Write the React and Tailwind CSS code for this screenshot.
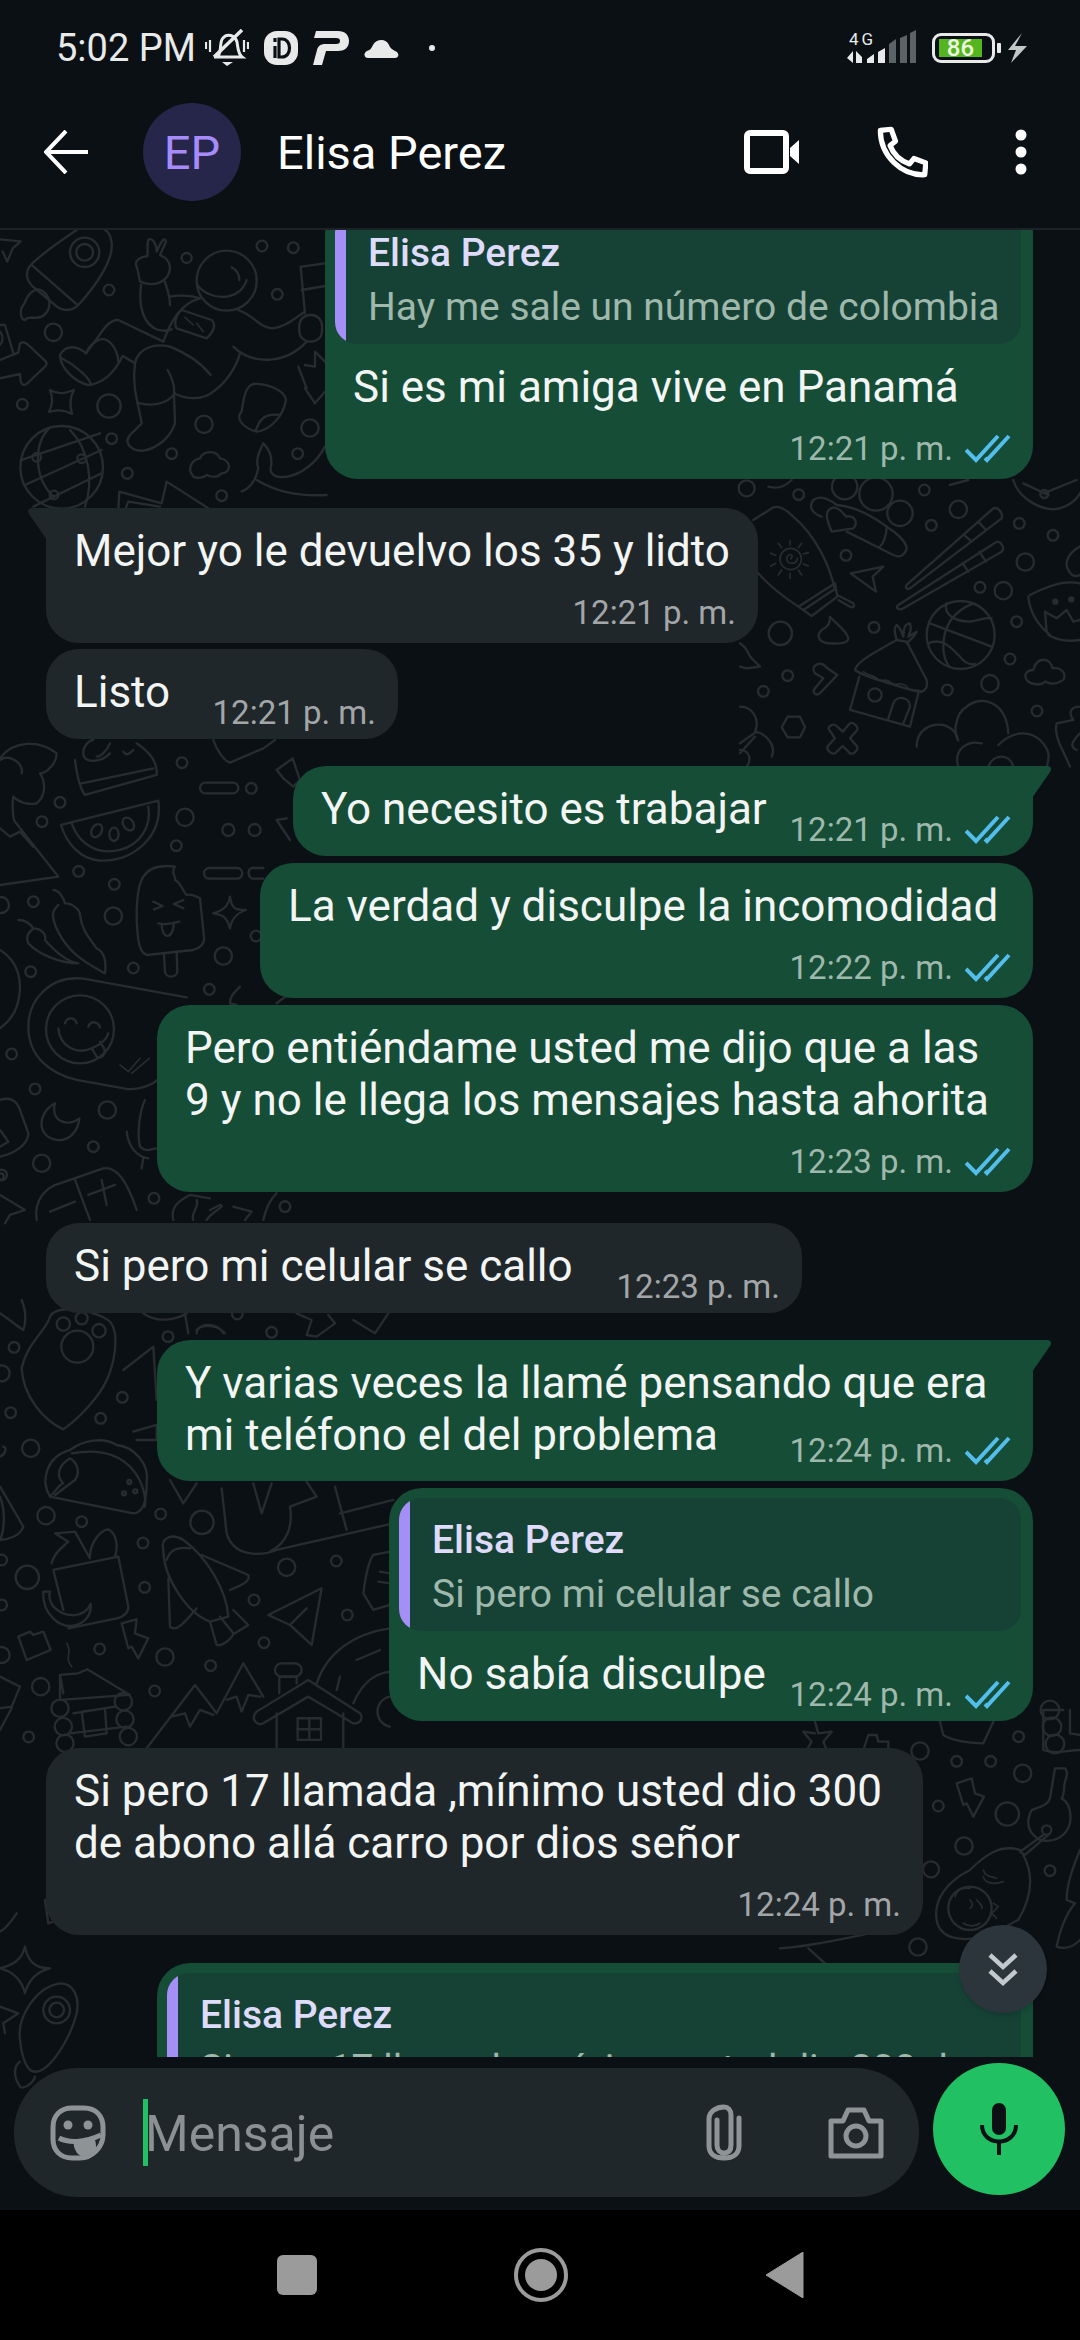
import React from 'react';

const FONT = { fontFamily: 'Roboto, sans-serif' };

function Dots({ items }) {
  return items.map(([x, y, r], i) => <circle key={i} cx={x} cy={y} r={r} />);
}

// Doodles are written in the coordinates of 3x crops, hence the scale on each group
function Wallpaper() {
  return (
    <svg className="absolute inset-0" width="1080" height="1980" viewBox="0 230 1080 1980" fill="none" stroke="#282c30" strokeWidth="7" strokeLinecap="round" strokeLinejoin="round">
      {/* top left: rocket, astronaut, globe */}
      <g transform="translate(0 230) scale(.3333)">
        <path d="M230 0C170 40 110 85 88 110C72 135 85 160 105 175L165 225C185 245 215 245 235 225C290 165 340 90 335 40C333 20 325 5 315 0" />
        <path d="M95 105L232 225" />
        <circle cx="254" cy="67" r="44" /><circle cx="254" cy="67" r="25" />
        <path d="M105 180C75 195 80 215 70 225C55 245 65 270 75 270C85 255 105 270 125 260C150 245 155 215 140 195C130 180 115 175 105 180Z" />
        <path d="M0 28L62 34L38 55L22 95L8 65" />
        <path d="M0 390L55 368L60 340C70 335 75 335 85 345L138 395C142 402 140 405 135 410L80 462C70 468 65 462 62 455L60 432L0 445" />
        <path d="M0 285L15 285L40 370M0 305C10 315 10 335 0 345" />
        <path d="M150 480C175 495 195 490 222 480C208 505 208 525 216 552C190 538 170 538 147 546C158 525 160 505 150 480Z" />
        <circle cx="185" cy="712" r="124" />
        <path d="M65 690L300 610M75 765L305 660M100 830L305 730M150 592C100 640 100 740 160 800M210 600C270 660 280 760 255 830" />
        <circle cx="110" cy="682" r="13" /><circle cx="245" cy="686" r="13" /><circle cx="162" cy="795" r="13" />
        <path d="M423 165C415 230 430 285 475 300C495 305 505 302 515 298M510 225C510 190 495 160 495 155M510 200C530 195 570 195 600 205" />
        <path d="M420 155C470 175 510 150 510 110C505 85 490 80 480 75L498 35C495 20 485 30 470 65C470 40 455 20 445 30C440 45 445 60 442 78C425 80 400 90 410 110C415 120 415 135 420 155Z" />
        <circle cx="680" cy="152" r="90" />
        <path d="M592 165C630 215 720 215 740 150M695 112C710 120 718 135 718 150" />
        <path d="M490 335L355 270C330 270 315 290 295 320L258 370C235 350 200 340 180 375C180 410 220 455 265 465C310 460 345 425 368 378L405 400C395 470 415 520 425 580L390 615C370 640 395 665 430 662C470 655 510 625 525 580L522 490C560 510 610 510 640 485C680 455 705 420 720 370" />
        <path d="M490 335C510 280 540 220 600 205M185 385C205 395 260 430 272 460M258 370C270 340 300 320 320 330C345 345 355 375 355 395" />
        <path d="M405 400C415 350 470 340 510 350C560 370 600 395 632 435M503 420C515 440 525 470 522 490M412 518C450 530 500 525 525 490" />
        <path d="M700 350C750 400 850 410 920 335M715 240C760 255 780 295 820 295C860 290 890 260 915 245" />
        <rect x="898" y="255" width="68" height="80" rx="32" />
        <path d="M545 240L635 270C650 285 640 305 620 325L530 295C520 280 530 250 545 240Z" />
        <path d="M555 262L580 285M590 280L610 305" strokeWidth="5" />
        <path d="M905 110L975 100M902 110L915 250M905 180L975 168" />
        <path d="M915 405L945 410L945 365L975 395M920 475L895 410M915 475L945 520L975 485" />
        <path d="M725 545C705 565 730 595 770 605C810 600 850 560 858 510C855 480 800 460 760 462C735 470 730 510 725 545ZM768 600C780 565 795 550 840 555" />
        <path d="M580 740C560 715 575 690 600 685C610 660 650 660 660 685C695 690 695 730 665 730C650 745 630 740 620 735C610 745 590 745 580 740Z" />
        <path d="M725 785C760 770 770 740 775 715C765 690 780 660 790 640C805 655 820 680 812 715C810 735 830 745 860 740C900 735 950 700 975 650M770 750C820 780 880 800 980 795" />
        <path d="M355 840L358 785L485 820L500 755L625 835M375 840L385 815L480 830" />
        <Dots items={[[327, 180, 16], [560, 84, 15], [786, 48, 16], [880, 53, 16], [832, 193, 16], [160, 307, 26], [67, 523, 16], [327, 528, 35], [335, 626, 16], [612, 583, 26], [515, 671, 16], [382, 730, 16], [893, 671, 16], [665, 797, 16], [930, 594, 26]]} />
      </g>
      {/* middle right, beside the short bubbles */}
      <g transform="translate(740 480) scale(.3333)">
        <path d="M40 120L100 82C120 75 140 90 160 110C230 170 270 260 285 330M55 280C90 320 130 350 175 380" />
        <path d="M175 380L285 310L292 350L215 408Z" /><path d="M190 390L280 330M292 345L340 370C345 380 340 385 330 380L295 360" />
        <circle cx="152" cy="237" r="32" strokeWidth="5" /><path d="M152 237C165 225 145 215 140 235C140 255 170 255 172 235" strokeWidth="5" />
        <path d="M150 182V195M150 280V295M92 220L107 226M92 258L107 250M190 222L205 218M190 252L205 258M115 190L125 203M185 190L175 203M115 285L125 270M185 285L175 270" strokeWidth="5" />
        <path d="M245 110C215 100 205 80 220 60C240 45 265 55 290 75C350 80 400 110 440 140C475 160 500 190 500 205C495 225 480 235 460 225L320 155" />
        <path d="M275 155C260 120 250 90 280 82C305 85 310 105 320 110C345 105 355 130 340 145L275 155Z" />
        <path d="M440 140C440 165 430 190 420 200" />
        <path d="M500 315L760 85C775 80 790 100 785 115L510 325C500 330 495 322 500 315ZM475 375L770 185C785 185 795 205 785 215L485 388C470 390 468 380 475 375Z" />
        <path d="M672 165L695 185M715 125L738 150M668 250L685 275M718 215L738 245" />
        <circle cx="662" cy="465" r="102" />
        <path d="M570 430L755 500M620 370C610 400 640 425 690 425C720 420 740 410 755 415M700 370C650 390 610 430 610 500C610 530 620 550 630 562M565 490C610 470 640 510 660 530C675 550 690 555 705 552" />
        <path d="M345 570C350 550 370 535 470 480L500 485L560 600C565 625 550 640 535 635C510 630 370 590 345 570Z" />
        <path d="M370 575C385 590 395 580 410 595C425 610 435 590 455 610C470 620 485 600 505 625C515 635 535 625 545 635" strokeWidth="5" />
        <path d="M358 590L330 690L510 740L535 640M445 715L460 670C470 645 510 650 510 680L490 730" />
        <path d="M470 480C465 460 460 445 470 435C480 440 485 455 490 470C490 450 495 430 510 430C515 445 510 460 505 470L530 455C525 470 510 480 500 490" />
        <path d="M430 260L332 280L408 335L398 290Z" />
        <path d="M270 410C285 430 320 450 325 475C325 490 300 492 270 490C240 490 225 470 245 450C265 440 270 430 270 410Z" />
        <path d="M125 742L143 710H180L195 742L180 772H143Z" />
        <path d="M265 745C270 735 280 730 290 738L308 755L330 730C340 725 355 740 352 750L330 775L352 800C355 810 340 825 330 820L308 798L285 820C275 825 260 810 262 800L285 775Z" />
        <path d="M222 560C235 545 250 550 262 565L292 585L240 640C225 650 215 635 225 625L250 595L225 580C220 575 220 565 222 560Z" />
        <path d="M885 612C850 610 845 570 880 570C890 530 930 530 938 565C975 560 985 600 960 605C945 615 925 610 915 605C905 615 895 615 885 612Z" />
        <path d="M655 782C640 760 645 700 680 680C730 640 800 670 805 760M775 795C810 760 860 745 900 780C930 810 930 830 920 860M530 800C530 750 570 730 610 735C640 745 650 760 655 782M655 860C640 810 680 780 725 790M745 860C760 820 810 820 820 860" />
        <path d="M870 345C960 300 995 305 1020 310M865 350C870 410 910 450 930 465M920 455L915 395L950 415L980 390L1000 425L1020 420M925 465C960 485 990 485 1020 480" />
        <circle cx="946" cy="365" r="6" fill="#282c30" /><circle cx="994" cy="358" r="6" fill="#282c30" />
        <path d="M1020 200C990 215 970 245 985 270C995 290 1005 290 1020 285" />
        <path d="M1020 680C990 680 985 700 1000 720L950 730C940 770 970 810 990 860M1020 760C1000 780 985 800 1010 810" />
        <path d="M820 0C830 40 880 85 940 88C980 85 1010 60 1020 40M910 40L1010 0M850 10L925 45" /><circle cx="913" cy="42" r="12" />
        <path d="M85 20C120 30 140 15 155 0M630 15L685 0" />
        <path d="M0 490C30 510 20 525 40 540L60 560L20 565L0 560" />
        <path d="M0 680C40 680 60 720 45 755C80 760 110 800 95 830M0 790L50 755M45 770L0 820M0 810C30 810 35 840 20 860" />
        <Dots items={[[20, 25, 24], [176, 44, 16], [314, 20, 38], [408, 42, 50], [480, 100, 38], [553, 30, 16], [655, 88, 26], [574, 136, 16], [838, 130, 16], [939, 166, 16], [856, 246, 26], [720, 322, 16], [790, 332, 26], [830, 425, 16], [318, 226, 16], [121, 460, 35], [402, 442, 16], [143, 587, 16], [70, 634, 16], [405, 645, 20], [810, 537, 16], [750, 611, 26], [622, 630, 16], [891, 693, 16]]} />
      </g>
      {/* left edge, lower half */}
      <g transform="translate(0 740) scale(.3333)">
        <path d="M0 60C30 40 70 70 65 100M0 55C40 0 120 0 170 40C170 70 140 100 120 100C140 130 135 170 110 190C90 195 60 190 40 170C35 200 40 240 45 245L175 410L0 435M0 265L30 290L60 275L100 320" />
        <path d="M225 60C230 100 240 145 255 165L470 105C475 60 440 30 410 10M245 130L460 85" />
        <path d="M250 40C250 15 270 0 280 0M330 40C300 70 250 70 250 40M330 10C320 35 300 50 290 50M400 30C390 40 380 50 370 35" />
        <path d="M183 255L475 182C490 290 400 365 300 362C240 358 200 310 183 255Z" />
        <path d="M215 250C240 320 300 345 360 330C420 315 455 260 445 200" />
        <ellipse cx="290" cy="272" rx="15" ry="21" transform="rotate(30 290 272)" /><ellipse cx="342" cy="283" rx="14" ry="20" /><ellipse cx="385" cy="252" rx="15" ry="21" transform="rotate(-35 385 252)" />
        <path d="M415 600C405 520 410 440 430 410C450 380 490 375 525 380C510 400 530 410 525 420C545 430 545 450 560 465C575 460 590 470 600 475L612 590C615 610 600 625 580 630L440 645C425 640 418 620 415 600Z" />
        <path d="M492 645L495 695C497 715 530 715 532 695L530 635M460 485L488 498L462 508M550 480L522 492L550 505M475 550C495 555 515 552 538 545M485 552C485 600 520 600 522 548" />
        <path d="M690 470C695 510 710 510 738 510C710 520 695 535 690 565C680 530 670 525 640 520C670 510 685 500 690 470Z" />
        <path d="M160 450C175 450 190 470 195 490C220 490 240 510 240 525C245 570 265 590 290 625C310 635 320 660 315 700C260 670 200 640 165 555C160 530 150 520 175 495" />
        <path d="M55 540C75 540 90 550 100 565C125 565 140 585 135 600C170 640 200 665 235 670C180 670 110 640 85 610C75 585 90 575 100 565" />
        <path d="M560 772L250 716C150 705 85 780 85 860C85 950 150 1000 230 1020L380 1047C430 1050 470 1030 490 1000" />
        <circle cx="240" cy="868" r="102" />
        <path d="M195 850C200 830 225 830 230 850M265 860C272 840 295 845 300 862M175 865C180 920 230 945 275 925C300 915 320 900 325 880M275 925L290 950C300 960 320 945 312 925L300 905" />
        <path d="M360 975L385 995L420 955M395 1000L448 955" strokeWidth="5" />
        <path d="M165 1090C110 1120 110 1190 170 1200C210 1205 235 1170 238 1135C210 1160 150 1150 165 1090Z" />
        <path d="M0 630C50 660 75 720 50 800C40 830 20 850 0 865M0 1080C30 1070 50 1080 60 1110L85 1180C85 1210 50 1240 0 1250M0 1170L25 1205L0 1220" />
        <path d="M435 1080C420 1110 410 1180 420 1220C440 1240 455 1225 470 1225M380 1175C385 1220 410 1250 445 1255M430 1255L425 1285" />
        <path d="M110 1440C100 1380 140 1340 180 1330L310 1285C350 1280 380 1320 410 1410M225 1320L270 1440M150 1415L225 1385M265 1365L345 1335M305 1320L320 1395" />
        <path d="M0 1365L75 1410L30 1425L15 1450M0 1300C15 1300 15 1320 0 1320" />
        <path d="M520 1440C510 1400 540 1380 570 1365L630 1375M590 1380C600 1400 570 1420 580 1440M620 1440C640 1410 680 1400 660 1395L630 1410M700 1400L755 1415L735 1440M790 1440C800 1400 810 1380 830 1360" />
        <path d="M830 90L878 55L900 120L880 140L850 115ZM860 235L830 240L870 300" />
        <path d="M720 740C700 760 690 770 690 790L710 795M830 790L870 760" />
        <rect x="600" y="128" width="115" height="32" rx="16" /><rect x="612" y="384" width="115" height="32" rx="16" /><path d="M790 384H755C740 390 745 415 760 416H790" />
        <path d="M640 0C650 30 670 60 690 68L790 25L825 0" />
        <Dots items={[[546, 68, 16], [180, 187, 16], [126, 245, 16], [555, 232, 26], [529, 317, 16], [685, 270, 18], [764, 270, 18], [754, 145, 16], [236, 394, 16], [343, 433, 16], [100, 485, 16], [340, 528, 26], [3, 495, 24], [92, 695, 16], [400, 684, 16], [670, 648, 26], [628, 748, 16], [768, 588, 16], [35, 942, 16], [105, 1047, 16], [322, 1110, 26], [280, 1220, 16], [125, 1270, 26], [462, 1375, 16], [855, 1400, 16], [5, 1305, 16]]} />
      </g>
      <g transform="translate(0 1300) scale(.3333)">
        <path d="M65 205C80 130 140 90 150 50C170 10 290 30 330 65C360 100 345 200 310 260C280 310 230 360 190 388C130 360 70 290 65 205Z" />
        <circle cx="232" cy="140" r="48" /><circle cx="190" cy="72" r="20" /><circle cx="245" cy="55" r="18" /><circle cx="297" cy="92" r="20" />
        <path d="M0 40C30 60 60 85 70 90C80 60 75 25 65 0" />
        <path d="M150 590C120 540 140 470 210 450C250 420 310 410 350 435C400 440 450 490 440 550C440 600 430 640 400 640L150 590" />
        <path d="M215 460C270 450 340 450 390 500C420 530 440 580 435 620M150 590C170 570 180 550 190 550C170 530 170 500 210 475C235 490 240 520 225 540L165 585" />
        <circle cx="388" cy="546" r="6" /><circle cx="372" cy="580" r="6" /><circle cx="406" cy="574" r="6" />
        <path d="M160 810L355 770L385 920C385 940 370 950 350 955L205 985M160 810L190 930M155 790C160 760 190 740 205 725L165 700L225 695L270 775M270 770C270 730 300 690 325 688C350 700 355 740 345 770" />
        <path d="M130 875C125 940 180 990 230 975C260 965 275 940 272 912C255 950 200 960 160 920C150 905 145 890 150 875Z" />
        <path d="M490 750C480 710 520 700 550 720C620 770 680 870 685 950L630 965C560 940 490 830 490 750ZM605 765L745 825C750 840 740 850 690 870M505 835L510 980C530 1000 560 960 590 925M630 965L650 1035C670 1040 700 1010 700 1000L660 950M700 930L745 975L705 1000M500 780C510 750 530 740 570 745" />
        <path d="M965 865L805 945L870 975L935 1035L965 865ZM870 975L920 925" />
        <path d="M365 970L410 958L405 1000L445 1015L415 1075L395 1040L385 1045Z" />
        <path d="M55 1010L90 995L100 1005L130 995L152 1050L80 1080Z" />
        <path d="M200 1030C220 1060 190 1070 215 1100" strokeWidth="5" />
        <path d="M180 1125L235 1120L262 1108L390 1185L180 1200ZM180 1125L190 1180" />
        <circle cx="180" cy="1225" r="26" /><circle cx="190" cy="1280" r="26" /><circle cx="195" cy="1330" r="26" /><circle cx="370" cy="1205" r="26" /><circle cx="375" cy="1258" r="26" /><circle cx="385" cy="1310" r="26" />
        <path d="M245 1235L315 1225L320 1300L255 1310ZM210 1300L380 1280M220 1240L345 1220" />
        <path d="M440 1345L585 1155L650 1240L730 1090L790 1190M515 1250L555 1240L570 1280L600 1230L640 1245M680 1200L710 1190L725 1235L745 1185L780 1190" />
        <path d="M770 1235L925 1140L1080 1240C1095 1260 1070 1280 1050 1265L925 1190L790 1270C770 1280 750 1255 770 1235ZM830 1240V1345M1030 1240V1345" />
        <rect x="893" y="1255" width="70" height="65" /><path d="M928 1255V1320M893 1288H963" />
        <path d="M838 1180V1130H890V1150" /><rect x="825" y="1090" width="80" height="40" rx="20" />
        <path d="M665 565L680 700C700 770 780 770 830 750L1180 670M1005 560L1040 690M1020 640L1180 600M870 620C880 680 860 730 810 755M760 550L785 640L815 550M870 620L950 590L920 545" />
        <path d="M510 540L550 610L590 550M370 210L460 140L470 300M400 395L470 375V420L410 420" />
        <path d="M950 1150C980 1060 1060 1000 1170 985M1070 1080L1140 1050M1010 1170L1020 1130M1060 1210C1090 1140 1130 1120 1170 1115M1170 1190C1120 1200 1120 1270 1170 1280" />
        <path d="M1170 755L1120 765C1100 790 1095 850 1090 880L1120 930L1170 915M1140 815L1170 820M1135 845L1170 850" />
        <path d="M430 40C470 70 530 60 560 40M555 40L565 100M590 100C590 70 650 70 675 100M590 90C620 60 660 80 670 100M890 40L935 60L920 105L950 110L1005 70L985 45M1060 60L1125 100L1165 40" />
        <path d="M0 470C20 460 20 440 10 440M0 560L70 680C60 710 20 720 0 720M0 590C20 640 10 700 0 720" />
        <path d="M0 1130L60 1160L35 1220L0 1225M0 1290L35 1225" />
        <Dots items={[[42, 142, 16], [32, 338, 16], [5, 220, 24], [302, 355, 16], [367, 292, 16], [504, 110, 16], [815, 97, 16], [712, 42, 16], [92, 445, 26], [138, 647, 26], [245, 665, 16], [482, 642, 16], [606, 667, 35], [429, 729, 16], [82, 832, 35], [434, 862, 16], [5, 780, 16], [5, 915, 16], [860, 802, 26], [1009, 783, 16], [762, 900, 16], [792, 1028, 16], [1042, 945, 16], [299, 1047, 16], [495, 1071, 26], [632, 1097, 16], [122, 1160, 26], [464, 1173, 16], [86, 1311, 16], [5, 1065, 24]]} />
      </g>
      {/* right of the long incoming bubble */}
      <g transform="translate(780 1700) scale(.3333)">
        <path d="M105 65L115 100L155 95L130 125L140 150M105 100L70 95L95 125L80 150M250 150L265 105H290L295 125H325V150" />
        <path d="M480 65L490 105C520 125 580 130 610 130L640 65" />
        <path d="M850 30H790V150C830 165 860 150 900 150M870 30V100L900 105" />
        <circle cx="810" cy="30" r="28" /><circle cx="816" cy="80" r="28" /><circle cx="825" cy="132" r="28" />
        <path d="M530 250L575 235L585 280L612 290L580 350L560 310L550 315Z" />
        <path d="M825 205L855 205C865 215 860 230 855 245C850 265 855 280 845 295C870 310 875 335 870 370C860 410 820 430 780 420C745 400 735 370 755 330C780 320 805 315 810 295Z" />
        <circle cx="800" cy="390" r="14" />
        <path d="M790 405L720 455L735 465L810 400" />
        <path d="M720 450C660 430 610 470 570 510C500 545 460 600 470 660C480 720 550 725 610 710C660 695 690 670 715 660C750 600 765 530 730 465" />
        <circle cx="570" cy="625" r="65" />
        <path d="M525 590C535 560 555 565 570 565M610 510C615 530 635 530 650 535M610 530C615 550 640 555 670 545M570 600C580 610 580 620 570 625M590 600C600 610 610 620 605 625M550 670C565 680 585 680 600 670M640 610L655 620L635 640L650 655" strokeWidth="5" />
        <path d="M900 450C880 500 860 550 860 600L885 610C860 640 840 690 830 740C860 750 880 740 900 720" />
        <path d="M0 745C80 740 180 720 290 695M85 745L135 790" />
        <Dots items={[[420, 153, 26], [530, 184, 16], [632, 184, 16], [716, 110, 16], [728, 220, 26], [475, 318, 16], [682, 342, 35], [552, 438, 26], [453, 508, 24], [810, 512, 16], [414, 741, 26]]} />
      </g>
      {/* behind and around the composer */}
      <g transform="translate(0 1900) scale(.3333)">
        <path d="M50 40C30 70 10 90 0 95M135 0L145 70L190 55L185 0" />
        <path d="M75 140C85 190 110 205 150 205C110 215 85 240 75 280C65 240 40 215 0 205C40 195 65 180 75 140Z" />
        <path d="M60 420C50 350 110 260 180 250C220 250 240 290 230 340C210 420 150 510 110 515C80 520 65 470 60 420Z" />
        <circle cx="170" cy="330" r="40" /><circle cx="170" cy="330" r="22" />
        <path d="M0 320L55 340L10 370L15 400" />
        <path d="M60 485C40 500 40 530 60 560C70 570 100 550 105 530" />
      </g>
    </svg>
  );
}

function Ticks() {
  return (
    <svg width="46" height="30" viewBox="0 0 46 30" fill="none" stroke="#53bdeb" strokeWidth="4" className="ml-[12px] mb-[5px] shrink-0">
      <path d="M1 16L11 26L33 2" />
      <path d="M20 24L22 26L44 2" />
    </svg>
  );
}

function Time({ value, out }) {
  return (
    <div className={`flex items-end h-[40px] leading-[40px] whitespace-nowrap text-[33px] ${out ? 'text-[#9fb8ac]' : 'text-[#a3a6a8]'}`}>
      <span>{value}</span>
      {out && <Ticks />}
    </div>
  );
}

function Quote({ name, text }) {
  return (
    <div className="relative overflow-hidden bg-[#164235] rounded-[22px] pl-[33px] pr-[20px] h-[133px]">
      <div className="absolute left-0 top-0 bottom-0 w-[11px] bg-[#a38ff5]" />
      <div className="text-[#dfdbfb] text-[39px] font-medium leading-[44px] pt-[20px] h-[64px] whitespace-nowrap">{name}</div>
      <div className="text-[#9fb8ac] text-[39px] leading-[44px] pt-[10px] whitespace-nowrap">{text}</div>
    </div>
  );
}

function Tail({ side, color }) {
  if (side === 'right') {
    return (
      <svg className="absolute top-0 right-[-19px]" width="20" height="32" viewBox="0 0 20 32" fill={color}>
        <path d="M0 0H15C19 0 20 3 18 6L0 32Z" />
      </svg>
    );
  }
  return (
    <svg className="absolute top-0 left-[-18px]" width="19" height="32" viewBox="0 0 19 32" fill={color}>
      <path d="M19 0H4C0 0 -1 3 1 6L19 32Z" />
    </svg>
  );
}

// layout "stack": time on its own row; "inline": time beside the text;
// "overlap": time pulled up beside the last of several lines
function Bubble({ out, tail, quote, time, layout = 'stack', mt, w, text }) {
  const bg = out ? 'bg-[#154d37]' : 'bg-[#20272a]';
  const corner = tail ? (out ? 'rounded-tr-none' : 'rounded-tl-none') : '';
  return (
    <div className={`relative rounded-[33px] ${bg} ${corner} ${out ? 'self-end' : 'self-start'} ${mt} ${w}`}>
      {tail && <Tail side={out ? 'right' : 'left'} color={out ? '#154d37' : '#20272a'} />}
      {quote && (
        <div className="pt-[10px] pl-[10px] pr-[12px]">
          <Quote {...quote} />
        </div>
      )}
      {layout === 'inline' ? (
        <div className="flex items-end justify-between pl-[28px] pr-[22px] pb-[6px]">
          <div className="text-[44px] leading-[52px] text-[#f2f5f4] whitespace-nowrap pt-[17px] pb-[15px]">{text}</div>
          <Time value={time} out={out} />
        </div>
      ) : (
        <div className="pl-[28px] pr-[22px] pt-[17px] pb-[10px]">
          <div className="text-[44px] leading-[52px] text-[#f2f5f4] whitespace-nowrap">{text}</div>
          <div className={`flex justify-end ${layout === 'overlap' ? 'mt-[-30px]' : 'mt-[16px]'}`}><Time value={time} out={out} /></div>
        </div>
      )}
    </div>
  );
}

function StatusBar() {
  return (
    <div className="flex items-center justify-between h-[92px] pl-[56px] pr-[53px] pt-[4px]">
      <div className="flex items-center">
        <span className="text-[38px] text-[#e8eaea] leading-none whitespace-nowrap">5:02 PM</span>
        {/* muted bell */}
        <svg width="44" height="38" viewBox="0 0 44 38" fill="none" stroke="#e8eaea" strokeWidth="3" className="ml-[9px]">
          <path d="M13 27C17 23 14 13 18 9C22 4 30 6 32 13C33 19 33 25 37 28H9" />
          <path d="M37 1L9 28" strokeWidth="3.5" />
          <path d="M1 13V20M5 11V23M39 11V23M43 13V20" strokeWidth="2.2" />
          <path d="M17 33H28L22 37Z" fill="#e8eaea" stroke="none" />
        </svg>
        <div className="ml-[15px] w-[34px] h-[34px] rounded-[13px] bg-[#e8eaea] flex items-center justify-center">
          <svg width="24" height="24" viewBox="0 0 24 24" fill="none" stroke="#0b1014" strokeWidth="3.2">
            <path d="M6 10V22M6 2V6" />
            <path d="M10 3H13C23 3 23 21 13 21H10Z" />
          </svg>
        </div>
        <svg width="36" height="34" viewBox="0 0 36 34" fill="#e8eaea" className="ml-[15px]">
          <path d="M3 0H25C32 0 36 4 36 10C36 17 31 20 25 20H13L9 34H0L4 19C5 15 8 13 12 13H23C26 13 27 12 27 10C27 8 26 7 23 7H1Z" />
        </svg>
        <svg width="35" height="19" viewBox="0 0 35 19" fill="#e8eaea" className="ml-[15px]">
          <path d="M4 19C0 19 -1 14 3 12C6 11 7 10 9 6C12 0 22 -1 25 6C26 9 28 10 31 12C36 14 35 19 31 19Z" />
        </svg>
        <div className="ml-[30px] w-[6px] h-[6px] rounded-full bg-[#e8eaea]" />
      </div>
      <div className="flex items-center">
        <svg width="70" height="36" viewBox="0 0 70 36" className="mr-[15px]" fill="#e8eaea">
          <text x="0" y="15" fontSize="17" fontFamily="Roboto, sans-serif" textLength="24" dx="2">4G</text>
          <path d="M6 21V33L0 28ZM9 21L15 27V33H9Z" />
          <path d="M20 29L27 24V33H20ZM31 22L38 18V33H31Z" />
          <path d="M42 14L49 9V33H42ZM53 8L60 5V33H53ZM63 3L69 0V33H63Z" fill="#5d6266" />
        </svg>
        <div className="relative w-[63px] h-[30px] rounded-[9px] border-[3px] border-[#e8eaea] flex items-center pl-[4px]">
          <div className="w-[43px] h-[18px] bg-[#55b51f] flex items-center justify-center text-[#ecf7df] text-[24px] font-medium leading-none">86</div>
        </div>
        <div className="w-[4px] h-[10px] rounded-[1px] bg-[#e8eaea] ml-[2px]" />
        <svg width="19" height="30" viewBox="0 0 19 30" fill="#c4c7c8" className="ml-[7px]">
          <path d="M14 0L7 13H19L3 30L8 17H0Z" />
        </svg>
      </div>
    </div>
  );
}

function Header() {
  return (
    <div className="flex items-center h-[138px] pl-[44px] border-b-[2px] border-[#1d2226] pb-[16px]">
      <svg width="44" height="44" viewBox="0 0 44 44" fill="none" stroke="#fff" strokeWidth="4">
        <path d="M44 22H3M22 1L2 22L22 43" />
      </svg>
      <div className="ml-[55px] w-[98px] h-[98px] rounded-full bg-[#25264a] flex items-center justify-center text-[#a78bfa] text-[47px] leading-none">EP</div>
      <div className="ml-[36px] text-[47px] text-white leading-none">Elisa Perez</div>
      <div className="ml-auto flex items-center">
        <svg width="56" height="44" viewBox="0 0 56 44" fill="none" stroke="#fff" strokeWidth="6" className="mr-[-2px]">
          <rect x="3" y="3" width="39" height="38" rx="3" />
          <path d="M46 18L55 10V34L46 26Z" fill="#fff" stroke="none" />
        </svg>
        <svg width="52" height="52" viewBox="0 0 24 24" fill="none" stroke="#fff" strokeWidth="2.4" strokeLinejoin="round" className="ml-[78px]">
          <path d="M2 2L7 1.500L9 7L6.500 9C8 13 11 16 15.500 17.500L17.500 15L23 17L22.500 22.500C12 23 2 14 2 2Z" />
        </svg>
        <svg width="12" height="46" viewBox="0 0 12 46" fill="#fff" className="ml-[87px] mr-[53px]">
          <circle cx="6" cy="6" r="5.500" /><circle cx="6" cy="23" r="5.500" /><circle cx="6" cy="40" r="5.500" />
        </svg>
      </div>
    </div>
  );
}

function Composer() {
  return (
    <div className="flex items-start pl-[14px] pt-[6px]">
      <div className="flex items-center w-[905px] h-[129px] rounded-[64px] bg-[#20272a] pl-[36px] pr-[35px] mt-[5px]">
        <svg width="56" height="56" viewBox="0 0 56 56" fill="none" stroke="#8e9496" strokeWidth="5">
          <path d="M30 53H22C10 53 3 45 3 34V22C3 10 11 3 22 3H34C46 3 53 11 53 22V30C53 42 42 53 30 53Z" />
          <path d="M9 33C18 38 34 38 51 30" />
          <path d="M26 36C26 48 34 52 40 49C45 46 44 38 42 34" fill="#8e9496" />
          <circle cx="18" cy="20" r="4.500" fill="#8e9496" stroke="none" /><circle cx="38" cy="20" r="4.500" fill="#8e9496" stroke="none" />
        </svg>
        <div className="w-[5px] h-[67px] bg-[#21c063] ml-[37px]" />
        <div className="text-[50px] text-[#8b9092] leading-none pt-[2px] ml-[-3px]">Mensaje</div>
        <svg width="36" height="57" viewBox="0 0 36 57" fill="none" stroke="#8e9496" strokeWidth="5" strokeLinecap="round" className="ml-auto">
          <path d="M11 16V41C11 46 14 49 18 49C23 49 25 46 25 41V11C25 6 22 3 18 3C11 3 3 7 3 15V42C3 50 9 54 18 54C27 54 33 50 33 42V14" />
        </svg>
        <svg width="56" height="52" viewBox="0 0 56 52" fill="none" stroke="#8e9496" strokeWidth="5" className="ml-[86px]">
          <path d="M3 14H15L20 3H36L41 14H53V49H3Z" strokeLinejoin="round" />
          <circle cx="28" cy="29" r="10" />
        </svg>
      </div>
      <div className="ml-[14px] w-[132px] h-[132px] rounded-full bg-[#21c063] flex items-center justify-center">
        <svg width="38" height="52" viewBox="0 0 38 52" fill="none">
          <rect x="12" y="0" width="14" height="32" rx="7" fill="#0b1014" />
          <path d="M2 22C2 44 36 44 36 22" stroke="#0b1014" strokeWidth="4" />
          <path d="M19 38V52" stroke="#0b1014" strokeWidth="4" />
        </svg>
      </div>
    </div>
  );
}

function NavBar() {
  return (
    <div className="flex items-center justify-center h-[130px] bg-black">
      <div className="w-[40px] h-[40px] rounded-[6px] bg-[#9b9b9b]" />
      <div className="ml-[197px] w-[54px] h-[54px] rounded-full border-[4px] border-[#9b9b9b] flex items-center justify-center">
        <div className="w-[32px] h-[32px] rounded-full bg-[#9b9b9b]" />
      </div>
      <svg width="38" height="46" viewBox="0 0 38 46" fill="#9b9b9b" className="ml-[198px]">
        <path d="M37 0V46L0 23Z" stroke="#9b9b9b" strokeLinejoin="round" />
      </svg>
    </div>
  );
}

export default function App() {
  return (
    <div className="w-[1080px] h-[2340px] flex flex-col overflow-hidden bg-[#0b1014]" style={FONT}>
      <StatusBar />
      <Header />
      <div className="relative h-[1980px]">
        <Wallpaper />
        <div className="relative h-[1827px] overflow-hidden">
          <div className="flex flex-col pl-[46px] pr-[47px] mt-[-29px]">
            <Bubble out w="w-[708px]" time="12:21 p. m." text="Si es mi amiga vive en Panamá" quote={{ name: 'Elisa Perez', text: 'Hay me sale un número de colombia' }} />
            <Bubble tail w="w-[712px]" time="12:21 p. m." text="Mejor yo le devuelvo los 35 y lidto" mt="mt-[29px]" />
            <Bubble w="w-[352px]" time="12:21 p. m." text="Listo" layout="inline" mt="mt-[6px]" />
            <Bubble out tail w="w-[740px]" time="12:21 p. m." text="Yo necesito es trabajar" layout="inline" mt="mt-[27px]" />
            <Bubble out w="w-[773px]" time="12:22 p. m." text="La verdad y disculpe la incomodidad" mt="mt-[7px]" />
            <Bubble out w="w-[876px]" time="12:23 p. m." text={<>Pero entiéndame usted me dijo que a las<br />9 y no le llega los mensajes hasta ahorita</>} mt="mt-[7px]" />
            <Bubble w="w-[756px]" time="12:23 p. m." text="Si pero mi celular se callo" layout="inline" mt="mt-[31px]" />
            <Bubble out tail w="w-[876px]" time="12:24 p. m." text={<>Y varias veces la llamé pensando que era<br />mi teléfono el del problema</>} layout="overlap" mt="mt-[27px]" />
            <Bubble out w="w-[644px]" time="12:24 p. m." text="No sabía disculpe" layout="inline" mt="mt-[7px]" quote={{ name: 'Elisa Perez', text: 'Si pero mi celular se callo' }} />
            <Bubble w="w-[877px]" time="12:24 p. m." text={<>Si pero 17 llamada ,mínimo usted dio 300<br />de abono allá carro por dios señor</>} mt="mt-[27px]" />
            <Bubble out w="w-[876px]" time="12:24 p. m." text="" mt="mt-[28px]" quote={{ name: 'Elisa Perez', text: 'Si pero 17 llamada ,mínimo usted dio 300 de' }} />
          </div>
        </div>
        <Composer />
        <button className="absolute left-[959px] top-[1695px] w-[88px] h-[88px] rounded-full bg-[#2b353b] flex items-center justify-center shadow-md">
          <svg width="36" height="36" viewBox="0 0 36 36" fill="none" stroke="#c3cacd" strokeWidth="4.500">
            <path d="M5 4L18 16L31 4M5 20L18 32L31 20" />
          </svg>
        </button>
      </div>
      <NavBar />
    </div>
  );
}
